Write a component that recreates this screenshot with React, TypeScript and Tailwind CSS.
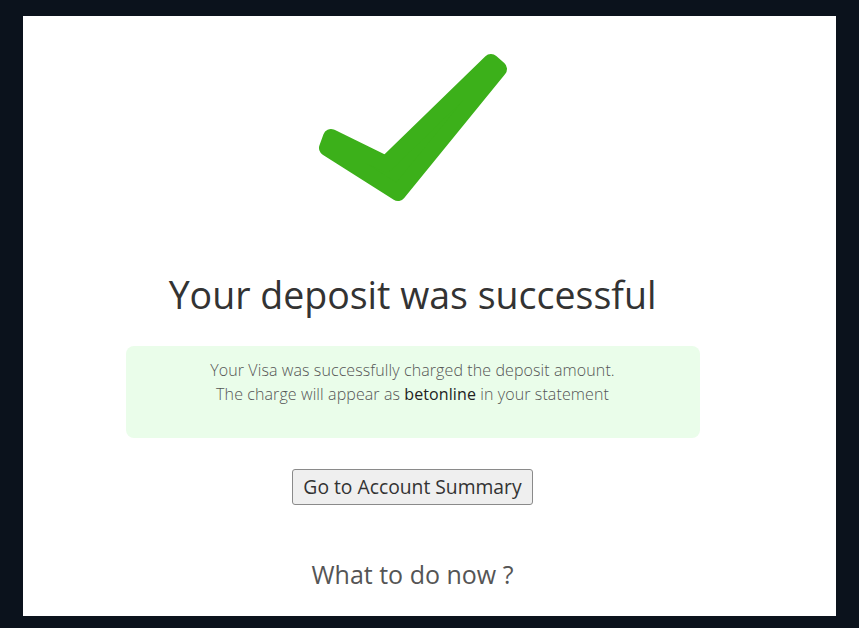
import React from "react";

function CheckMark() {
  return (
    <svg
      viewBox="310 45 205 165"
      width="205"
      height="165"
      className="mx-auto block"
      aria-hidden="true"
    >
      <polygon
        points="331,137 386,164 491,62 499,69 398,193 327,148"
        fill="#3cb01a"
        stroke="#3cb01a"
        strokeWidth="16"
        strokeLinejoin="round"
      />
    </svg>
  );
}

export default function App() {
  return (
    <div className="h-[628px] w-[859px] bg-[#0b121c] pt-[16px] pl-[23px] pr-[23px] pb-[12px] font-['Open_Sans',sans-serif]">
      <div className="h-[600px] overflow-hidden bg-white">
        <div className="w-[779px]">
          <div className="pt-[29px]">
            <CheckMark />
          </div>

          <h1 className="mt-[61px] text-center text-[37.5px] leading-[48px] font-normal text-[#333333]">
            Your deposit was successful
          </h1>

          <div className="mx-auto mt-[27px] h-[92px] w-[574px] rounded-lg bg-[#eafdea] pt-[12px] text-center text-[16px] leading-[24px] font-light text-[#555555]">
            <p className="tracking-[0.1px]">Your Visa was successfully charged the deposit amount.</p>
            <p className="tracking-[0.1px]">
              The charge will appear as <span className="font-normal text-[#222222]">betonline</span> in your statement
            </p>
          </div>

          <div className="mt-[31px] flex justify-center">
            <button
              type="button"
              className="h-[36px] rounded-[3px] border border-[#8a8a8a] bg-[#efefef] px-[10px] text-[19.3px] leading-[34px] text-[#333333]"
            >
              Go to Account Summary
            </button>
          </div>

          <h2 className="mt-[53px] text-center text-[25px] leading-[32px] font-normal text-[#555555]">
            What to do now ?
          </h2>
        </div>
      </div>
    </div>
  );
}
